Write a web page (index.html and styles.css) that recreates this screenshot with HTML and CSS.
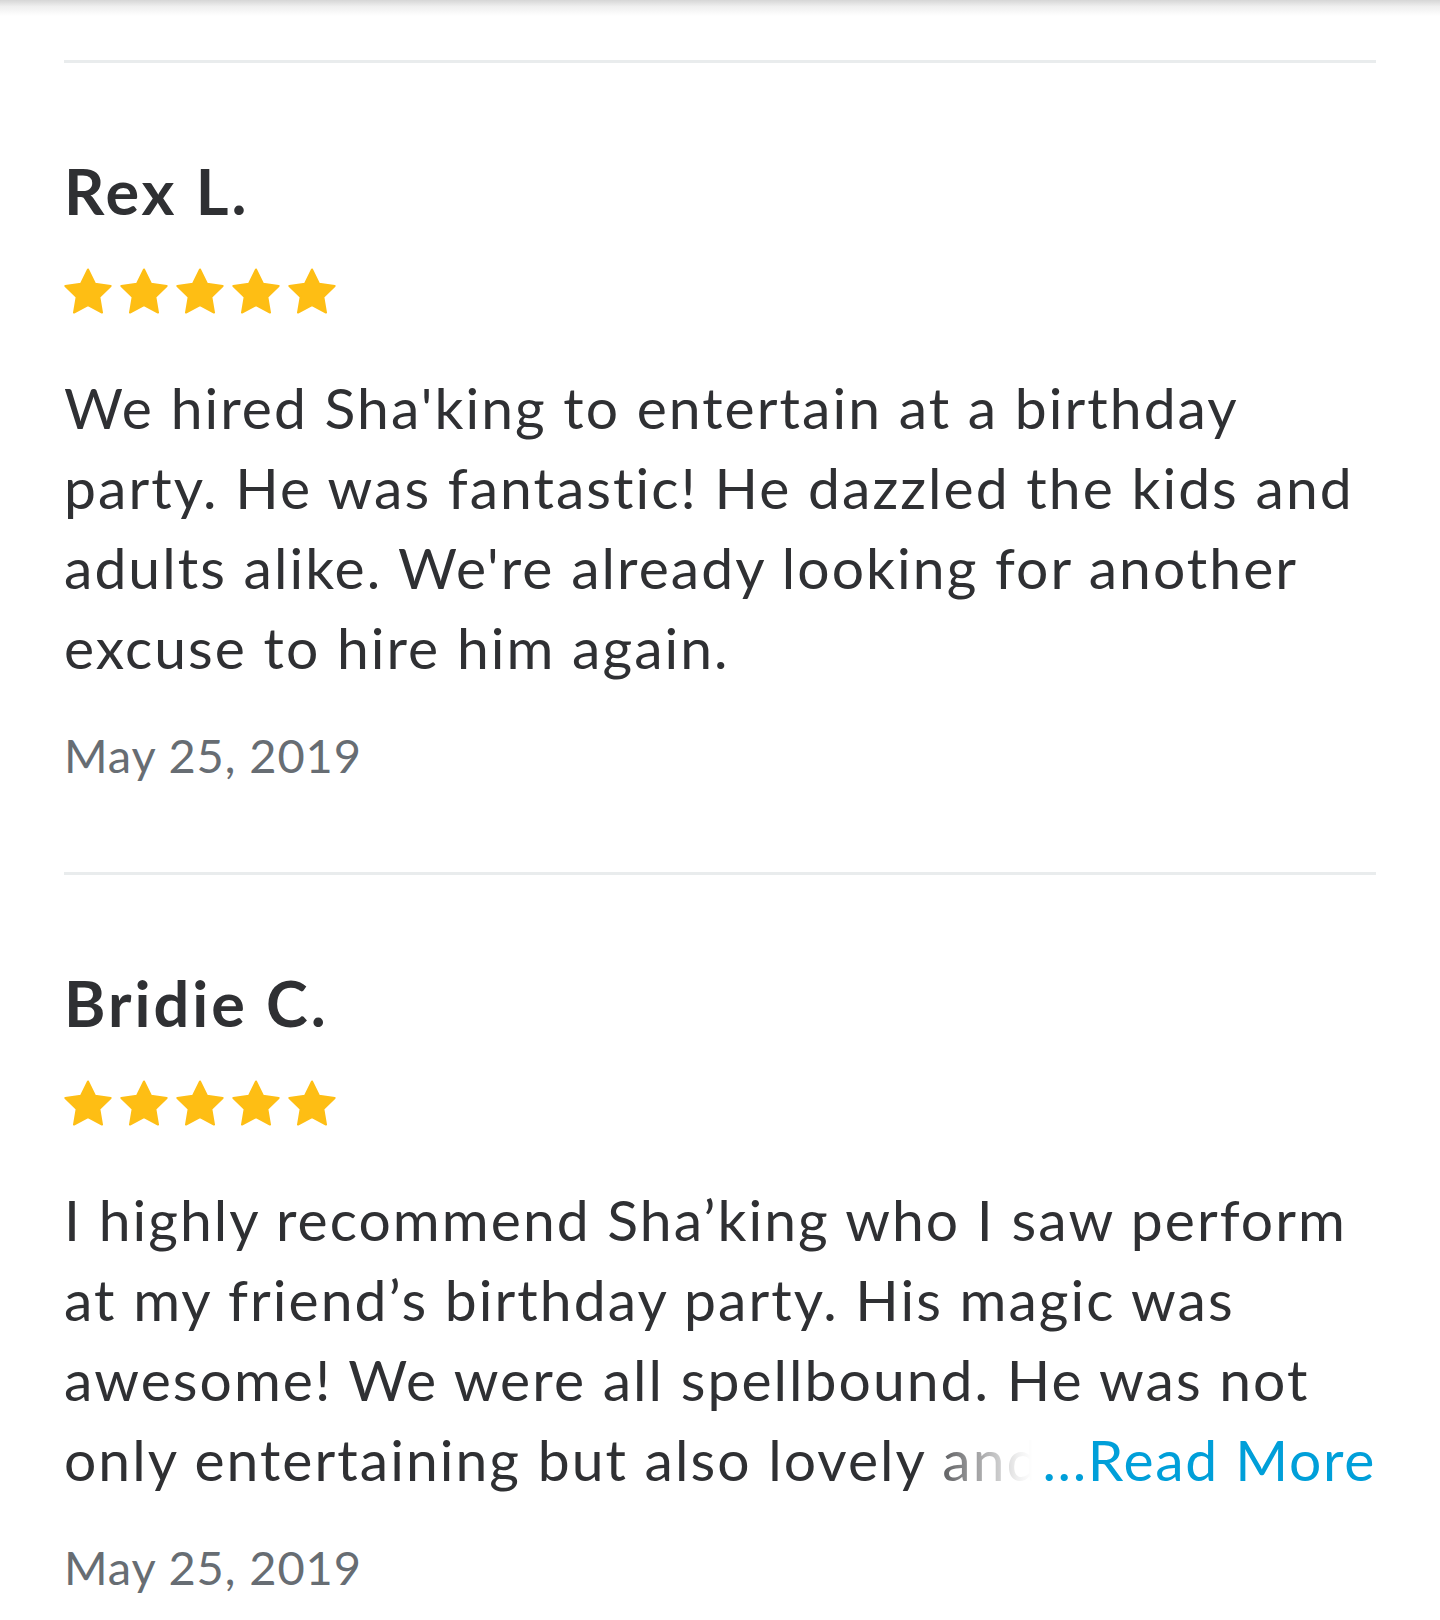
FILE: index.html
```html
<!DOCTYPE html>
<html lang="en">
<head>
<meta charset="utf-8">
<title>Reviews</title>
<link rel="stylesheet" href="styles.css">
</head>
<body>
<div class="topshade"></div>
<main class="reviews">
  <article class="review">
    <h2 class="review-name">Rex L.</h2>
    <div class="stars" aria-label="5 stars">
      <svg class="star" viewBox="1.4 1.4 21.2 20.2"><path d="M12 2l3.09 6.26L22 9.27l-5 4.87 1.18 6.88L12 17.77l-6.18 3.25L7 14.14 2 9.27l6.91-1.01L12 2z"/></svg>
      <svg class="star" viewBox="1.4 1.4 21.2 20.2"><path d="M12 2l3.09 6.26L22 9.27l-5 4.87 1.18 6.88L12 17.77l-6.18 3.25L7 14.14 2 9.27l6.91-1.01L12 2z"/></svg>
      <svg class="star" viewBox="1.4 1.4 21.2 20.2"><path d="M12 2l3.09 6.26L22 9.27l-5 4.87 1.18 6.88L12 17.77l-6.18 3.25L7 14.14 2 9.27l6.91-1.01L12 2z"/></svg>
      <svg class="star" viewBox="1.4 1.4 21.2 20.2"><path d="M12 2l3.09 6.26L22 9.27l-5 4.87 1.18 6.88L12 17.77l-6.18 3.25L7 14.14 2 9.27l6.91-1.01L12 2z"/></svg>
      <svg class="star" viewBox="1.4 1.4 21.2 20.2"><path d="M12 2l3.09 6.26L22 9.27l-5 4.87 1.18 6.88L12 17.77l-6.18 3.25L7 14.14 2 9.27l6.91-1.01L12 2z"/></svg>
    </div>
    <div class="review-body">
      <p class="review-text">We hired Sha'king to entertain at a birthday party. He was fantastic! He dazzled the kids and adults alike. We're already looking for another excuse to hire him again.</p>
    </div>
    <div class="review-date">May 25, 2019</div>
  </article>
  <article class="review">
    <h2 class="review-name">Bridie C.</h2>
    <div class="stars" aria-label="5 stars">
      <svg class="star" viewBox="1.4 1.4 21.2 20.2"><path d="M12 2l3.09 6.26L22 9.27l-5 4.87 1.18 6.88L12 17.77l-6.18 3.25L7 14.14 2 9.27l6.91-1.01L12 2z"/></svg>
      <svg class="star" viewBox="1.4 1.4 21.2 20.2"><path d="M12 2l3.09 6.26L22 9.27l-5 4.87 1.18 6.88L12 17.77l-6.18 3.25L7 14.14 2 9.27l6.91-1.01L12 2z"/></svg>
      <svg class="star" viewBox="1.4 1.4 21.2 20.2"><path d="M12 2l3.09 6.26L22 9.27l-5 4.87 1.18 6.88L12 17.77l-6.18 3.25L7 14.14 2 9.27l6.91-1.01L12 2z"/></svg>
      <svg class="star" viewBox="1.4 1.4 21.2 20.2"><path d="M12 2l3.09 6.26L22 9.27l-5 4.87 1.18 6.88L12 17.77l-6.18 3.25L7 14.14 2 9.27l6.91-1.01L12 2z"/></svg>
      <svg class="star" viewBox="1.4 1.4 21.2 20.2"><path d="M12 2l3.09 6.26L22 9.27l-5 4.87 1.18 6.88L12 17.77l-6.18 3.25L7 14.14 2 9.27l6.91-1.01L12 2z"/></svg>
    </div>
    <div class="review-body is-clamped">
      <p class="review-text">I highly recommend Sha’king who I saw perform at my friend’s birthday party. His magic was awesome! We were all spellbound. He was not only entertaining but also lovely and kind with all of the children there.</p>
      <a class="read-more" href="#">...Read More</a>
    </div>
    <div class="review-date">May 25, 2019</div>
  </article>
</main>
</body>
</html>
```

FILE: styles.css
```css
* { box-sizing: border-box; }

html, body {
  margin: 0;
  padding: 0;
  background: #ffffff;
}

body {
  font-family: "Lato", "Open Sans", sans-serif;
  color: #2f3033;
}

.topshade {
  height: 16px;
  background: linear-gradient(to bottom, #d6d6d6 0%, #efefef 40%, #ffffff 100%);
}

.reviews {
  padding: 0 64px;
}

.review {
  border-top: 3px solid #e9eced;
  padding-top: 90px;
  padding-bottom: 87px;
}

.review:first-child {
  margin-top: 44px;
}

.review-name {
  margin: 0;
  font-size: 63px;
  line-height: 76px;
  font-weight: 700;
  letter-spacing: 3px;
  color: #2f3033;
}

.stars {
  display: flex;
  gap: 8px;
  margin-top: 39px;
  height: 46px;
}

.star {
  width: 48px;
  height: 46px;
  display: block;
}

.star path {
  fill: #febe14;
  stroke: #febe14;
  stroke-width: 0.9;
  stroke-linejoin: round;
}

.review-body {
  position: relative;
  margin-top: 53px;
}

.review-text {
  margin: 0;
  font-size: 57px;
  line-height: 80px;
  font-weight: 400;
  letter-spacing: 2.05px;
  color: #2f3033;
}

.is-clamped .review-text {
  max-height: 320px;
  overflow: hidden;
}

.read-more {
  position: absolute;
  right: 0;
  bottom: 0;
  font-size: 57px;
  line-height: 80px;
  letter-spacing: 1.7px;
  color: #009fd9;
  text-decoration: none;
  padding-left: 125px;
  background: linear-gradient(to right, rgba(255, 255, 255, 0) 0, rgba(255, 255, 255, 0.92) 100px, #ffffff 115px);
}

.review-date {
  margin-top: 38px;
  font-size: 47px;
  line-height: 60px;
  letter-spacing: 0.9px;
  color: #676d73;
}
```
